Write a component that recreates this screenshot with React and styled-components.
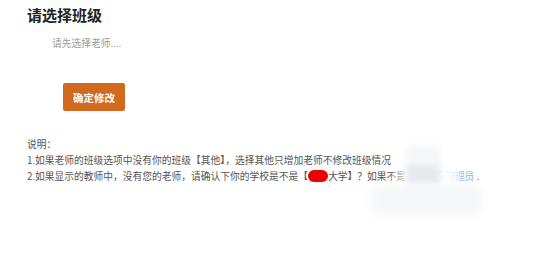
import React from "react";
import styled, { createGlobalStyle } from "styled-components";

const Global = createGlobalStyle`
  html, body { margin: 0; padding: 0; background: #fff; }
  body { font-family: "Noto Sans CJK SC", "Noto Sans", sans-serif; }
`;

const Page = styled.div`
  position: relative;
  display: flex;
  flex-direction: column;
  align-items: flex-start;
  width: 535px;
  height: 255px;
  padding: 6px 0 0 27px;
  box-sizing: border-box;
  overflow: hidden;
`;

const Title = styled.h2`
  margin: 0;
  font-size: 15px;
  line-height: 18px;
  font-weight: 700;
  color: #222;
`;

const Hint = styled.div`
  margin: 11px 0 0 25px;
  font-size: 9.75px;
  line-height: 16px;
  color: #999;
`;

const Button = styled.button`
  display: flex;
  align-items: center;
  justify-content: center;
  margin: 32px 0 0 36px;
  width: 62px;
  height: 28px;
  padding: 0;
  border: none;
  border-radius: 2px;
  background: #d2691e;
  color: #fff;
  font-family: inherit;
  font-size: 10.5px;
  font-weight: 700;
`;

const Notes = styled.div`
  display: flex;
  flex-direction: column;
  margin-top: 25px;
  font-size: 9.75px;
  line-height: 16px;
  color: #555;
  white-space: nowrap;
`;

const Redacted = styled.span`
  display: inline-block;
  width: 20px;
  height: 12px;
  border-radius: 6px;
  background: #ee0000;
  vertical-align: -2px;
`;

const Link = styled.span`
  color: #8fb0dc;
`;

const Blur = styled.div`
  position: absolute;
  left: ${(p) => p.x}px;
  top: ${(p) => p.y}px;
  width: ${(p) => p.w}px;
  height: ${(p) => p.h}px;
  background: ${(p) => p.c};
  filter: blur(${(p) => p.r || 3}px);
`;

export default function App() {
  return (
    <>
      <Global />
      <Page>
        <Title>请选择班级</Title>
        <Hint>请先选择老师....</Hint>
        <Button>确定修改</Button>
        <Notes>
          <span>说明：</span>
          <span>1.如果老师的班级选项中没有你的班级【其他】，选择其他只增加老师不修改班级情况</span>
          <span>
            2.如果显示的教师中，没有您的老师，请确认下你的学校是不是【<Redacted />大学】？如果不是，请联系管<Link>理员</Link> .
          </span>
        </Notes>
        <Blur x={402} y={169} w={54} h={16} c="rgba(255,255,255,0.97)" r={2} />
        <Blur x={392} y={171} w={10} h={12} c="rgba(255,255,255,0.45)" r={2} />
        <Blur x={406} y={163} w={34} h={21} c="rgba(222,225,230,0.7)" r={3} />
        <Blur x={406} y={146} w={34} h={16} c="rgba(238,240,243,0.6)" r={3} />
        <Blur x={372} y={186} w={110} h={28} c="rgba(243,244,246,0.85)" r={4} />
        <Blur x={452} y={170} w={10} h={14} c="rgba(240,244,250,0.6)" r={2} />
      </Page>
    </>
  );
}
